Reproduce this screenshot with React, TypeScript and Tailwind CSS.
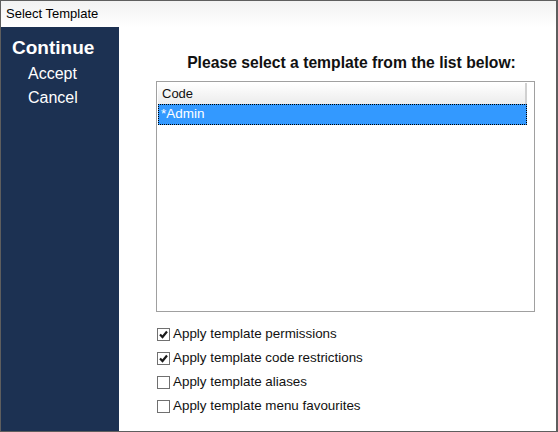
import React from 'react';

const options = [
  { label: 'Apply template permissions', checked: true },
  { label: 'Apply template code restrictions', checked: true },
  { label: 'Apply template aliases', checked: false },
  { label: 'Apply template menu favourites', checked: false },
];

function CheckBox({ checked }: { checked: boolean }) {
  return (
    <span className="w-[13px] h-[13px] border border-[#707070] bg-white flex items-center justify-center shrink-0">
      {checked && (
        <svg width="9" height="9" viewBox="0 0 9 9">
          <path d="M1 4.5 L3.5 7 L8 1.5" fill="none" stroke="#1a1a1a" strokeWidth="2.2" />
        </svg>
      )}
    </span>
  );
}

export default function App() {
  return (
    <div
      className="w-[558px] h-[432px] bg-white border-t border-l border-r-2 border-b border-[#5e5e5e] flex flex-col text-[#111]"
      style={{ fontFamily: '"Liberation Sans", Arial, sans-serif' }}
    >
      {/* Title bar */}
      <div className="h-[26px] shrink-0 bg-gradient-to-b from-[#f2f2f2] to-white flex items-center px-[5px] text-[13px] text-black">
        Select Template
      </div>

      <div className="flex flex-1 min-h-0">
        {/* Sidebar */}
        <div className="w-[118px] shrink-0 bg-[#1c3152] text-white flex flex-col pt-[9px]">
          <div className="pl-[11px] text-[19px] font-bold leading-[24px]">Continue</div>
          <div className="pl-[27px] text-[16px] leading-[24px] mt-[2px]">Accept</div>
          <div className="pl-[27px] text-[16px] leading-[24px]">Cancel</div>
        </div>

        {/* Main */}
        <div className="flex-1 flex flex-col pl-[37px] pt-[26px]">
          <div className="w-[379px] text-center text-[15.7px] font-bold leading-[20px] pl-[12px] whitespace-nowrap">
            Please select a template from the list below:
          </div>

          <div className="mt-[8px] w-[379px] h-[231px] border border-[#a0a0a0] bg-white p-px flex flex-col">
            <div className="h-[21px] flex">
              <div className="w-[369px] bg-gradient-to-b from-white to-[#ececec] border-r-2 border-[#d0d0d0] flex items-center pl-[4px] text-[13px]">
                Code
              </div>
            </div>
            <div className="h-[21px] w-[369px] bg-[#3399ff] border border-dotted border-black flex items-center pl-[2px] text-[13.5px] text-white">
              *Admin
            </div>
          </div>

          <div className="mt-[16px] flex flex-col gap-[11px] pl-px">
            {options.map((o) => (
              <div key={o.label} className="flex items-center gap-[3px] h-[13px] text-[13.4px] text-[#111]">
                <CheckBox checked={o.checked} />
                <span>{o.label}</span>
              </div>
            ))}
          </div>
        </div>
      </div>
    </div>
  );
}
